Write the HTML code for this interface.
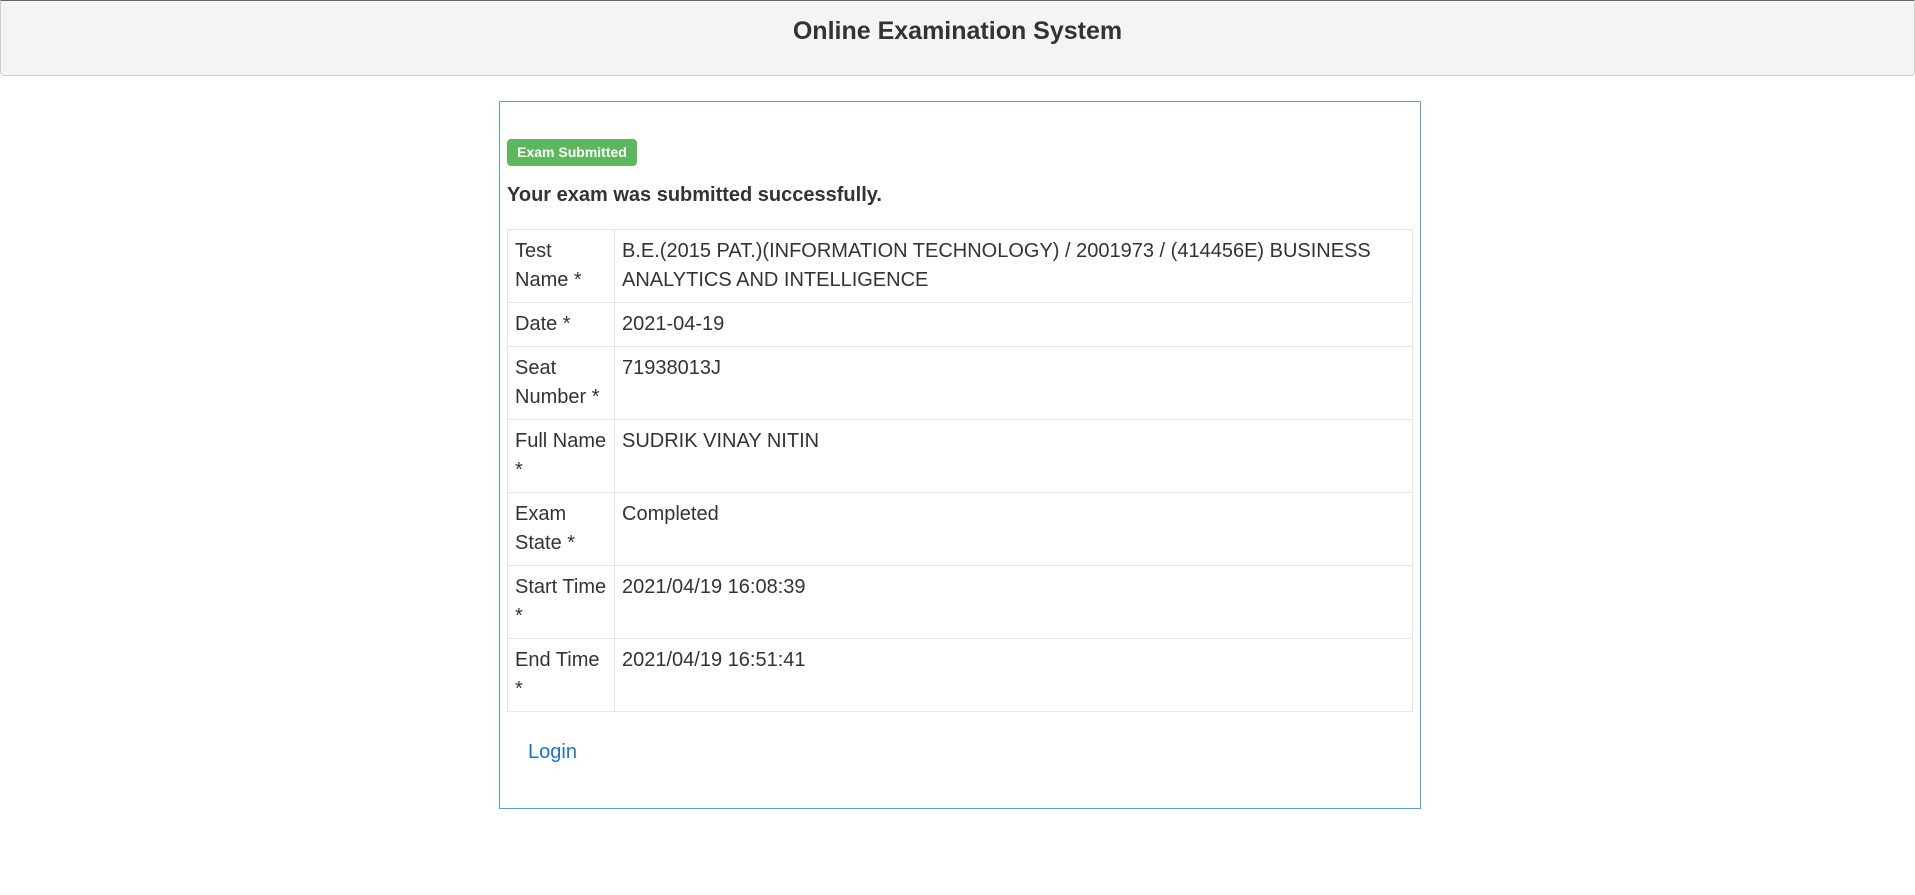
<!DOCTYPE html>
<html><head><meta charset="utf-8"><style>
body{margin:0;background:#fff;font-family:"Liberation Sans",Arial,sans-serif;color:#333;width:1915px;height:895px;overflow:hidden;position:relative}
.hdr{position:absolute;left:0;top:0;width:1913px;height:74px;background:#f4f4f4;border:1px solid #cfcfcf;border-top:1px solid #666;border-radius:0 0 4px 4px}
.hdr div{text-align:center;font-weight:bold;font-size:25px;line-height:60px;color:#333}
.box{position:absolute;left:499px;top:101px;width:922px;height:708px;border:1px solid #5a9fd0;box-sizing:border-box}
.badge{position:absolute;left:7px;top:37px;height:27px;width:130px;background:#5cb85c;color:#fff;font-weight:bold;font-size:14px;line-height:27px;text-align:center;border-radius:4px}
.h{position:absolute;left:7px;top:81px;font-size:20px;font-weight:bold;line-height:24px}
table{position:absolute;left:7px;top:127px;width:906px;border-collapse:collapse;font-size:20px;line-height:29px}
td{border:1px solid #e6e6e6;padding:7px 7px;vertical-align:top;box-sizing:border-box}
td:first-child{width:107px}
.login{position:absolute;left:28px;top:639px;font-size:20px;color:#1a73d0}
</style></head><body>
<div class="hdr"><div>Online Examination System</div></div>
<div class="box">
<div class="badge">Exam Submitted</div>
<div class="h">Your exam was submitted successfully.</div>
<table>
<tr style="height:73px"><td>Test Name *</td><td>B.E.(2015 PAT.)(INFORMATION TECHNOLOGY) / 2001973 / (414456E) BUSINESS ANALYTICS AND INTELLIGENCE</td></tr>
<tr style="height:43px"><td>Date *</td><td>2021-04-19</td></tr>
<tr style="height:73px"><td>Seat Number *</td><td>71938013J</td></tr>
<tr style="height:73px"><td>Full Name *</td><td>SUDRIK VINAY NITIN</td></tr>
<tr style="height:73px"><td>Exam State *</td><td>Completed</td></tr>
<tr style="height:73px"><td>Start Time *</td><td>2021/04/19 16:08:39</td></tr>
<tr style="height:73px"><td>End Time *</td><td>2021/04/19 16:51:41</td></tr>
</table>
<div class="login">Login</div>
</div>
</body></html>
